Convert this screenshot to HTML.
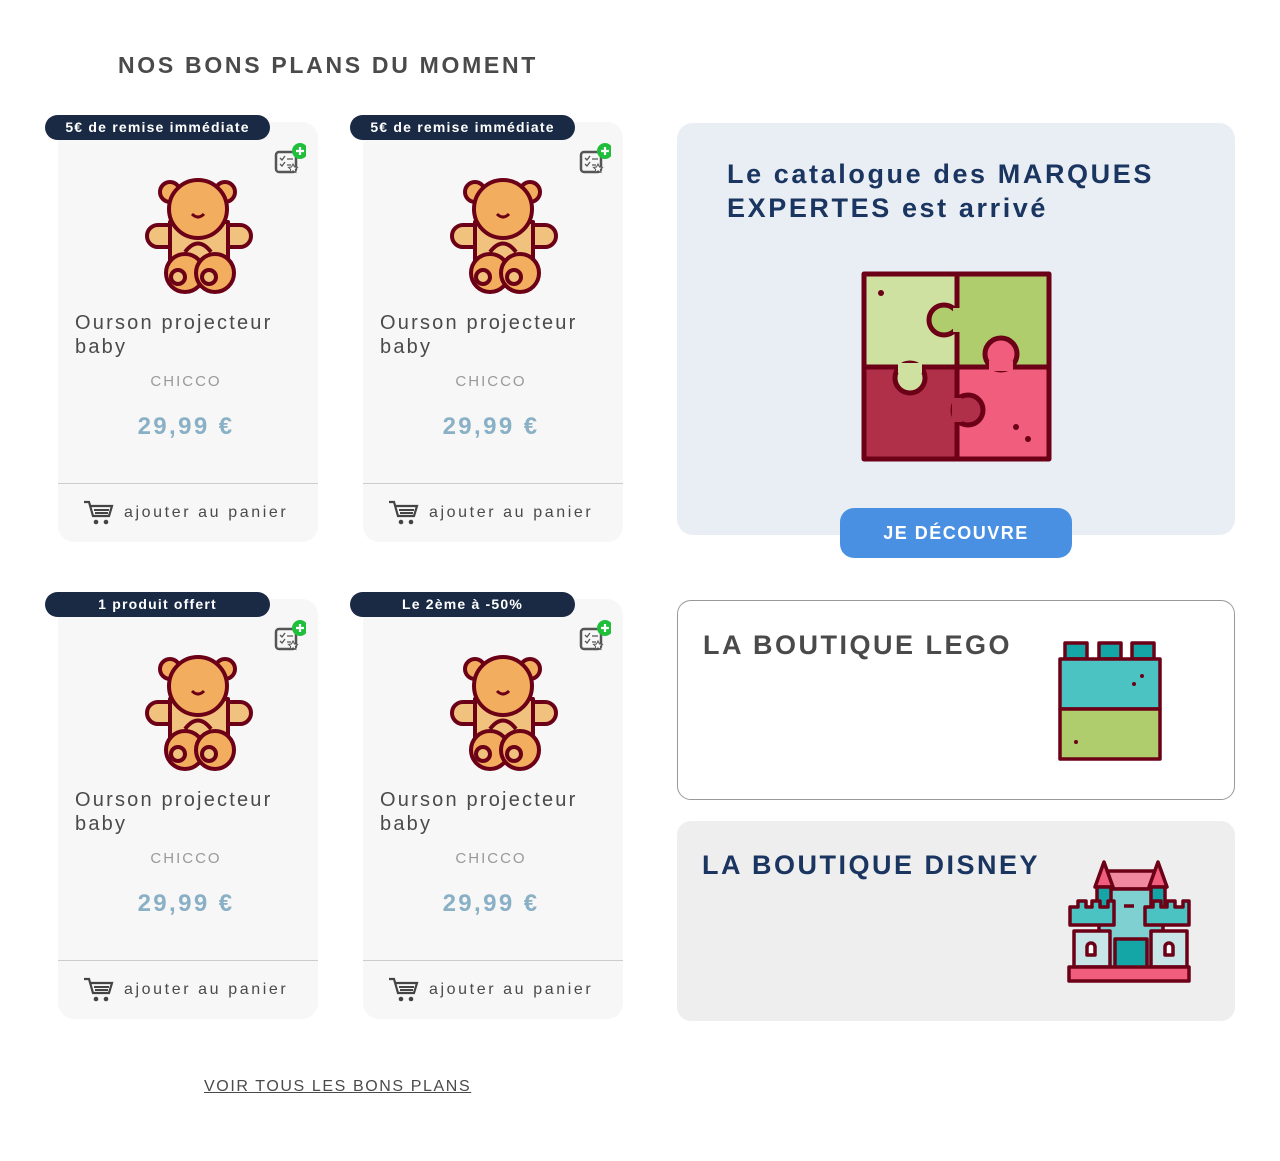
<!DOCTYPE html>
<html><head><meta charset="utf-8">
<style>
*{margin:0;padding:0;box-sizing:border-box}
body{width:1280px;height:1161px;background:#fff;position:relative;font-family:"Liberation Sans",sans-serif;overflow:hidden}
.abs{position:absolute}
h1{position:absolute;left:118px;top:52px;font-size:23px;font-weight:bold;color:#4a4a4a;letter-spacing:2.7px}
.card{position:absolute;width:260px;height:420px;background:#f7f7f7;border-radius:16px}
.badge{position:absolute;left:-13px;top:-7px;width:225px;height:25px;background:#1b2a44;border-radius:13px;color:#fff;font-size:14px;font-weight:bold;letter-spacing:1.2px;text-align:center;line-height:25px}
.wish{position:absolute;left:216px;top:20px}
.bear{position:absolute;left:87px;top:55px}
.name{position:absolute;left:17px;top:189px;font-size:20px;color:#4a4a4a;letter-spacing:2.2px;line-height:24px}
.brand{position:absolute;left:0;width:256px;top:251px;text-align:center;font-size:15px;color:#999;letter-spacing:2px}
.price{position:absolute;left:0;width:256px;top:291px;text-align:center;font-size:24px;font-weight:bold;color:#8ab0c6;letter-spacing:2.4px}
.sep{position:absolute;left:0;right:0;top:361px;border-top:1px solid #ccc}
.cart{position:absolute;left:25px;top:377px}
.add{position:absolute;left:66px;top:382px;font-size:16px;color:#4a4a4a;letter-spacing:2.6px}
</style></head><body>
<h1>NOS BONS PLANS DU MOMENT</h1>

<div class="card" style="left:58px;top:122px">
<div class="badge">5€ de remise immédiate</div>
<svg class="wish" width="32" height="34" viewBox="0 0 32 34"><rect x="2" y="10" width="20" height="20" rx="3" fill="none" stroke="#555" stroke-width="2.5"/><path d="M6 16l2 2 3-4M6 22l2 2 3-4M13 17h6M13 23h4" stroke="#555" stroke-width="1.3" fill="none"/><path d="M19 22l1.5 3 3 .4-2.2 2 .6 3-2.9-1.6-2.9 1.6.6-3-2.2-2 3-.4z" fill="#fff" stroke="#555" stroke-width="1"/><circle cx="26" cy="9" r="8" fill="#1fbf3c"/><path d="M26 5v8M22 9h8" stroke="#fff" stroke-width="2.2"/></svg>
<svg class="bear" width="110" height="120" viewBox="0 0 110 120"><g stroke="#6b0016" stroke-width="4" stroke-linejoin="round"><circle cx="25" cy="15" r="10" fill="#f2ad5f"/><circle cx="80" cy="15" r="10" fill="#f2ad5f"/><rect x="2" y="48" width="104" height="22" rx="11" fill="#f1c27d"/><path d="M25 45 L25 95 L83 95 L83 45 Z" fill="#f1c27d"/><circle cx="53" cy="32" r="29" fill="#f2ad5f"/><circle cx="40" cy="96" r="19" fill="#f2ad5f"/><circle cx="70" cy="96" r="19" fill="#f2ad5f"/><circle cx="33" cy="100" r="7" fill="#f1c27d"/><circle cx="64" cy="100" r="7" fill="#f1c27d"/><path d="M40 75 Q53 58 66 75" fill="none"/><path d="M47 37 Q53 43 59 37" fill="none" stroke-width="3"/></g></svg>
<div class="name">Ourson projecteur<br>baby</div>
<div class="brand">CHICCO</div>
<div class="price">29,99 €</div>
<div class="sep"></div>
<svg class="cart" width="32" height="28" viewBox="0 0 32 28"><path d="M1 3h5l4 14h16l3-10H8" fill="none" stroke="#444" stroke-width="2.2"/><path d="M11 11h15M12 14h13" stroke="#444" stroke-width="2"/><circle cx="13" cy="23" r="2.3" fill="#444"/><circle cx="23" cy="23" r="2.3" fill="#444"/></svg>
<div class="add">ajouter au panier</div>
</div>

<div class="card" style="left:363px;top:122px">
<div class="badge">5€ de remise immédiate</div>
<svg class="wish" width="32" height="34" viewBox="0 0 32 34"><rect x="2" y="10" width="20" height="20" rx="3" fill="none" stroke="#555" stroke-width="2.5"/><path d="M6 16l2 2 3-4M6 22l2 2 3-4M13 17h6M13 23h4" stroke="#555" stroke-width="1.3" fill="none"/><path d="M19 22l1.5 3 3 .4-2.2 2 .6 3-2.9-1.6-2.9 1.6.6-3-2.2-2 3-.4z" fill="#fff" stroke="#555" stroke-width="1"/><circle cx="26" cy="9" r="8" fill="#1fbf3c"/><path d="M26 5v8M22 9h8" stroke="#fff" stroke-width="2.2"/></svg>
<svg class="bear" width="110" height="120" viewBox="0 0 110 120"><g stroke="#6b0016" stroke-width="4" stroke-linejoin="round"><circle cx="25" cy="15" r="10" fill="#f2ad5f"/><circle cx="80" cy="15" r="10" fill="#f2ad5f"/><rect x="2" y="48" width="104" height="22" rx="11" fill="#f1c27d"/><path d="M25 45 L25 95 L83 95 L83 45 Z" fill="#f1c27d"/><circle cx="53" cy="32" r="29" fill="#f2ad5f"/><circle cx="40" cy="96" r="19" fill="#f2ad5f"/><circle cx="70" cy="96" r="19" fill="#f2ad5f"/><circle cx="33" cy="100" r="7" fill="#f1c27d"/><circle cx="64" cy="100" r="7" fill="#f1c27d"/><path d="M40 75 Q53 58 66 75" fill="none"/><path d="M47 37 Q53 43 59 37" fill="none" stroke-width="3"/></g></svg>
<div class="name">Ourson projecteur<br>baby</div>
<div class="brand">CHICCO</div>
<div class="price">29,99 €</div>
<div class="sep"></div>
<svg class="cart" width="32" height="28" viewBox="0 0 32 28"><path d="M1 3h5l4 14h16l3-10H8" fill="none" stroke="#444" stroke-width="2.2"/><path d="M11 11h15M12 14h13" stroke="#444" stroke-width="2"/><circle cx="13" cy="23" r="2.3" fill="#444"/><circle cx="23" cy="23" r="2.3" fill="#444"/></svg>
<div class="add">ajouter au panier</div>
</div>

<div class="card" style="left:58px;top:599px">
<div class="badge">1 produit offert</div>
<svg class="wish" width="32" height="34" viewBox="0 0 32 34"><rect x="2" y="10" width="20" height="20" rx="3" fill="none" stroke="#555" stroke-width="2.5"/><path d="M6 16l2 2 3-4M6 22l2 2 3-4M13 17h6M13 23h4" stroke="#555" stroke-width="1.3" fill="none"/><path d="M19 22l1.5 3 3 .4-2.2 2 .6 3-2.9-1.6-2.9 1.6.6-3-2.2-2 3-.4z" fill="#fff" stroke="#555" stroke-width="1"/><circle cx="26" cy="9" r="8" fill="#1fbf3c"/><path d="M26 5v8M22 9h8" stroke="#fff" stroke-width="2.2"/></svg>
<svg class="bear" width="110" height="120" viewBox="0 0 110 120"><g stroke="#6b0016" stroke-width="4" stroke-linejoin="round"><circle cx="25" cy="15" r="10" fill="#f2ad5f"/><circle cx="80" cy="15" r="10" fill="#f2ad5f"/><rect x="2" y="48" width="104" height="22" rx="11" fill="#f1c27d"/><path d="M25 45 L25 95 L83 95 L83 45 Z" fill="#f1c27d"/><circle cx="53" cy="32" r="29" fill="#f2ad5f"/><circle cx="40" cy="96" r="19" fill="#f2ad5f"/><circle cx="70" cy="96" r="19" fill="#f2ad5f"/><circle cx="33" cy="100" r="7" fill="#f1c27d"/><circle cx="64" cy="100" r="7" fill="#f1c27d"/><path d="M40 75 Q53 58 66 75" fill="none"/><path d="M47 37 Q53 43 59 37" fill="none" stroke-width="3"/></g></svg>
<div class="name">Ourson projecteur<br>baby</div>
<div class="brand">CHICCO</div>
<div class="price">29,99 €</div>
<div class="sep"></div>
<svg class="cart" width="32" height="28" viewBox="0 0 32 28"><path d="M1 3h5l4 14h16l3-10H8" fill="none" stroke="#444" stroke-width="2.2"/><path d="M11 11h15M12 14h13" stroke="#444" stroke-width="2"/><circle cx="13" cy="23" r="2.3" fill="#444"/><circle cx="23" cy="23" r="2.3" fill="#444"/></svg>
<div class="add">ajouter au panier</div>
</div>

<div class="card" style="left:363px;top:599px">
<div class="badge">Le 2ème à -50%</div>
<svg class="wish" width="32" height="34" viewBox="0 0 32 34"><rect x="2" y="10" width="20" height="20" rx="3" fill="none" stroke="#555" stroke-width="2.5"/><path d="M6 16l2 2 3-4M6 22l2 2 3-4M13 17h6M13 23h4" stroke="#555" stroke-width="1.3" fill="none"/><path d="M19 22l1.5 3 3 .4-2.2 2 .6 3-2.9-1.6-2.9 1.6.6-3-2.2-2 3-.4z" fill="#fff" stroke="#555" stroke-width="1"/><circle cx="26" cy="9" r="8" fill="#1fbf3c"/><path d="M26 5v8M22 9h8" stroke="#fff" stroke-width="2.2"/></svg>
<svg class="bear" width="110" height="120" viewBox="0 0 110 120"><g stroke="#6b0016" stroke-width="4" stroke-linejoin="round"><circle cx="25" cy="15" r="10" fill="#f2ad5f"/><circle cx="80" cy="15" r="10" fill="#f2ad5f"/><rect x="2" y="48" width="104" height="22" rx="11" fill="#f1c27d"/><path d="M25 45 L25 95 L83 95 L83 45 Z" fill="#f1c27d"/><circle cx="53" cy="32" r="29" fill="#f2ad5f"/><circle cx="40" cy="96" r="19" fill="#f2ad5f"/><circle cx="70" cy="96" r="19" fill="#f2ad5f"/><circle cx="33" cy="100" r="7" fill="#f1c27d"/><circle cx="64" cy="100" r="7" fill="#f1c27d"/><path d="M40 75 Q53 58 66 75" fill="none"/><path d="M47 37 Q53 43 59 37" fill="none" stroke-width="3"/></g></svg>
<div class="name">Ourson projecteur<br>baby</div>
<div class="brand">CHICCO</div>
<div class="price">29,99 €</div>
<div class="sep"></div>
<svg class="cart" width="32" height="28" viewBox="0 0 32 28"><path d="M1 3h5l4 14h16l3-10H8" fill="none" stroke="#444" stroke-width="2.2"/><path d="M11 11h15M12 14h13" stroke="#444" stroke-width="2"/><circle cx="13" cy="23" r="2.3" fill="#444"/><circle cx="23" cy="23" r="2.3" fill="#444"/></svg>
<div class="add">ajouter au panier</div>
</div>

<div class="abs" style="left:677px;top:123px;width:558px;height:412px;background:#e9eef5;border-radius:16px">
<div class="abs" style="left:50px;top:34px;font-size:27px;font-weight:bold;color:#1b3561;letter-spacing:2.6px;line-height:34px">Le catalogue des MARQUES<br>EXPERTES est arrivé</div>
<svg class="abs" style="left:183px;top:147px" width="194" height="194" viewBox="0 0 194 194">
<g stroke="#6b0016" stroke-width="5" stroke-linejoin="round">
<rect x="4" y="4" width="93" height="93" fill="#cfe1a0"/>
<rect x="97" y="4" width="92" height="93" fill="#b0cd6e"/>
<rect x="4" y="97" width="93" height="92" fill="#b0304a"/>
<rect x="97" y="97" width="92" height="92" fill="#f05d7d"/>
<circle cx="84" cy="50" r="15" fill="#b0cd6e"/>
<circle cx="141" cy="84" r="16" fill="#f05d7d"/>
<circle cx="50" cy="108" r="15" fill="#cfe1a0"/>
<circle cx="108" cy="140" r="15" fill="#b0304a"/>
</g>
<g stroke="none">
<rect x="93" y="38" width="10" height="24" fill="#b0cd6e"/>
<rect x="129" y="91" width="24" height="10" fill="#f05d7d"/>
<rect x="38" y="93" width="24" height="10" fill="#cfe1a0"/>
<rect x="92" y="128" width="10" height="24" fill="#b0304a"/>
</g>
<circle cx="21" cy="23" r="3" fill="#6b0016"/><circle cx="156" cy="157" r="3" fill="#6b0016"/><circle cx="168" cy="169" r="3" fill="#6b0016"/>
</svg>
</div>
<div class="abs" style="left:840px;top:508px;width:232px;height:50px;background:#4a90e2;border-radius:14px;color:#fff;font-size:18px;font-weight:bold;letter-spacing:1.5px;text-align:center;line-height:50px">JE DÉCOUVRE</div>

<div class="abs" style="left:677px;top:600px;width:558px;height:200px;border:1px solid #999;border-radius:14px;background:#fff">
<div class="abs" style="left:25px;top:29px;font-size:27px;font-weight:bold;color:#4a4a4a;letter-spacing:2.5px">LA BOUTIQUE LEGO</div>
<svg class="abs" style="left:379px;top:40px" width="106" height="120" viewBox="0 0 106 120"><g stroke="#6b0016" stroke-width="3.5" stroke-linejoin="round"><rect x="8" y="2" width="22" height="16" fill="#14a6a6"/><rect x="42" y="2" width="22" height="16" fill="#14a6a6"/><rect x="75" y="2" width="22" height="16" fill="#14a6a6"/><rect x="3" y="18" width="100" height="50" fill="#4bc3c3"/><rect x="3" y="68" width="100" height="50" fill="#b0cd6e"/></g><circle cx="85" cy="35" r="2" fill="#6b0016"/><circle cx="77" cy="43" r="2" fill="#6b0016"/><circle cx="19" cy="101" r="2" fill="#6b0016"/></svg>
</div>

<div class="abs" style="left:677px;top:821px;width:558px;height:200px;background:#eeeeee;border-radius:14px">
<div class="abs" style="left:25px;top:29px;font-size:27px;font-weight:bold;color:#1b3561;letter-spacing:2.5px">LA BOUTIQUE DISNEY</div>
<svg class="abs" style="left:390px;top:38px" width="126" height="126" viewBox="0 0 126 126"><g stroke="#6b0016" stroke-width="3.5" stroke-linejoin="round">
<rect x="40" y="12" width="48" height="18" fill="#f08aa0"/>
<rect x="32" y="30" width="64" height="80" fill="#7fd0d0"/>
<path d="M28 28 L37 3 L46 28 Z" fill="#f05d7d"/><path d="M82 28 L91 3 L100 28 Z" fill="#f05d7d"/>
<rect x="30" y="28" width="14" height="22" fill="#14a6a6"/><rect x="84" y="28" width="14" height="22" fill="#14a6a6"/>
<rect x="48" y="80" width="32" height="30" fill="#14a6a6"/>
<path d="M3 48 h8 v-6 h8 v6 h6 v-6 h8 v6 h8 v-6 h6 v24 h-44 z" fill="#4bc3c3"/>
<path d="M78 48 h8 v-6 h8 v6 h6 v-6 h8 v6 h8 v-6 h6 v24 h-44 z" fill="#4bc3c3"/>
<rect x="7" y="72" width="36" height="36" fill="#c8e6e8"/><rect x="84" y="72" width="36" height="36" fill="#c8e6e8"/>
<path d="M20 96 v-8 a4 4 0 0 1 8 0 v8 z" fill="#fff"/><path d="M98 96 v-8 a4 4 0 0 1 8 0 v8 z" fill="#fff"/>
<rect x="2" y="108" width="120" height="14" fill="#f05d7d"/>
<path d="M57 47 h10"/></g></svg>
</div>

<div class="abs" style="left:204px;top:1078px;font-size:16px;color:#4a4a4a;letter-spacing:1.6px;text-decoration:underline">VOIR TOUS LES BONS PLANS</div>
</body></html>
